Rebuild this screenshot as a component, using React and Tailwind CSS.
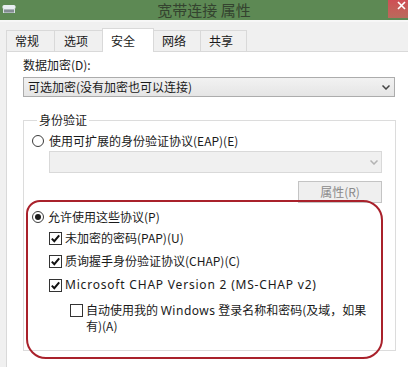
import React from "react";

const FONT = { fontFamily: '"Noto Sans CJK SC", "Noto Sans", sans-serif' };
const LATIN = { fontFamily: '"Noto Sans", "Noto Sans CJK SC", sans-serif' };

function Radio({ checked }) {
  return (
    <span className="flex h-[12px] w-[12px] shrink-0 items-center justify-center rounded-full border border-[#3c3c3c] bg-white">
      {checked && <span className="h-[6px] w-[6px] rounded-full bg-[#1c1c1c]" />}
    </span>
  );
}

function Check({ checked }) {
  return (
    <span className="flex h-[13px] w-[13px] shrink-0 items-center justify-center border border-[#333] bg-white">
      {checked && (
        <svg width="11" height="11" viewBox="0 0 11 11">
          <path d="M1.8 5.6 L4.3 8.2 L9.2 2.4" fill="none" stroke="#111" strokeWidth="2" />
        </svg>
      )}
    </span>
  );
}

function Chevron({ color }) {
  return (
    <svg width="8" height="5" viewBox="0 0 8 5">
      <path d="M0.5 0.5 L4 4 L7.5 0.5" fill="none" stroke={color} strokeWidth="1.5" />
    </svg>
  );
}

export default function App() {
  return (
    <div
      className="relative h-[367px] w-[408px] overflow-hidden bg-[#f0f0f0] text-[12px] leading-[16px] text-[#1a1a1a]"
      style={FONT}
    >
      {/* Title bar */}
      <div className="relative flex h-[22px] items-center justify-center border-b-2 border-[#f7f7f7] bg-[#5d8954]">
        <svg className="absolute left-[2px] top-[4px]" width="14" height="10" viewBox="0 0 14 10">
          <rect x="0.5" y="1" width="13" height="4" rx="1.5" fill="#e8eef2" />
          <rect x="1" y="5" width="12" height="4" fill="#d9e0e4" />
          <path d="M3 5.5v3M5 5.5v3M7 5.5v3M9 5.5v3M11 5.5v3" stroke="#2f3a40" strokeWidth="1" />
        </svg>
        <span className="text-[15px] leading-[20px] text-[#34432f]">宽带连接 属性</span>
        <div className="absolute right-0 top-0 flex h-[18px] w-[20px] items-start justify-end bg-gradient-to-b from-[#cf4e55] to-[#b96a5c] pr-[2px] pt-[1px]">
          <svg width="9" height="9" viewBox="0 0 9 9">
            <path d="M1 1 L8 8 M8 1 L1 8" stroke="#ffffff" strokeWidth="1.6" />
          </svg>
        </div>
      </div>

      {/* Tabs */}
      <div className="mt-[6px] flex h-[23px] items-end pl-[6px]">
        <div className="flex h-[21px] w-[49px] items-center border border-b-0 border-[#d9d9d9] bg-[#f0f0f0] pl-[8px]">常规</div>
        <div className="-ml-px flex h-[21px] w-[49px] items-center border border-b-0 border-[#d9d9d9] bg-[#f0f0f0] pl-[9px]">选项</div>
        <div className="relative z-10 -mb-px -ml-px flex h-[24px] w-[52px] items-center border border-b-0 border-[#d9d9d9] bg-white pl-[8px]">安全</div>
        <div className="-ml-px flex h-[21px] w-[48px] items-center border border-b-0 border-[#d9d9d9] bg-[#f0f0f0] pl-[8px]">网络</div>
        <div className="-ml-px flex h-[21px] w-[47px] items-center border border-b-0 border-[#d9d9d9] bg-[#f0f0f0] pl-[8px]">共享</div>
      </div>

      {/* Panel */}
      <div className="ml-[6px] h-[330px] w-[420px] border border-[#d9d9d9] bg-white pl-[16px] pt-[5px]">
        <div>数据加密(D):</div>
        <div className="mt-[4px] flex h-[20px] w-[372px] items-center justify-between border border-[#acacac] bg-gradient-to-b from-[#f2f2f2] to-[#e5e5e5] pl-[4px] pr-[4px]">
          <span>可选加密(没有加密也可以连接)</span>
          <Chevron color="#444" />
        </div>

        <fieldset className="mt-[15px] h-[239px] w-[373px] border border-[#dcdcdc] pl-[8px]">
          <legend className="ml-[5px] px-[2px]">身份验证</legend>

          <div className="mt-[5px] flex h-[16px] items-center gap-[5px]">
            <Radio />
            <span>使用可扩展的身份验证协议(EAP)(E)</span>
          </div>

          <div className="ml-[17px] mt-[2px] flex h-[22px] w-[333px] items-center justify-end border border-[#d9d9d9] bg-[#f0f0f0] pr-[3px]">
            <Chevron color="#b3b3b3" />
          </div>

          <div className="mt-[8px] flex w-[350px] justify-end">
            <div className="flex h-[22px] w-[84px] items-center justify-center border border-[#c4c4c4] bg-[#efefef] text-[#8a8a8a]">
              属性(R)
            </div>
          </div>

          <div className="mt-[6px] flex h-[16px] items-center gap-[4px]">
            <Radio checked />
            <span>允许使用这些协议(P)</span>
          </div>

          <div className="ml-[17px] mt-[5px] flex h-[16px] items-center gap-[3px]">
            <Check checked />
            <span>未加密的密码(PAP)(U)</span>
          </div>

          <div className="ml-[17px] mt-[7px] flex h-[16px] items-center gap-[3px]">
            <Check checked />
            <span>质询握手身份验证协议(CHAP)(C)</span>
          </div>

          <div className="ml-[17px] mt-[8px] flex h-[16px] items-center gap-[3px]">
            <Check checked />
            <span className="tracking-[0.8px]" style={LATIN}>Microsoft CHAP Version 2 (MS-CHAP v2)</span>
          </div>

          <div className="ml-[38px] mt-[9px] flex items-start gap-[3px]">
            <span className="mt-[2px]">
              <Check />
            </span>
            <div className="flex flex-col leading-[15px]">
              <span>
                自动使用我的 <span className="tracking-[0.5px]" style={LATIN}>Windows</span> 登录名称和密码(及域，如果
              </span>
              <span>有)(A)</span>
            </div>
          </div>
        </fieldset>
      </div>

      {/* Red annotation outline */}
      <div className="pointer-events-none absolute left-[26px] top-[200px] h-[159px] w-[357px] rounded-[20px] rounded-tl-[14px] border-[2.5px] border-[#a9212b]" />
    </div>
  );
}
